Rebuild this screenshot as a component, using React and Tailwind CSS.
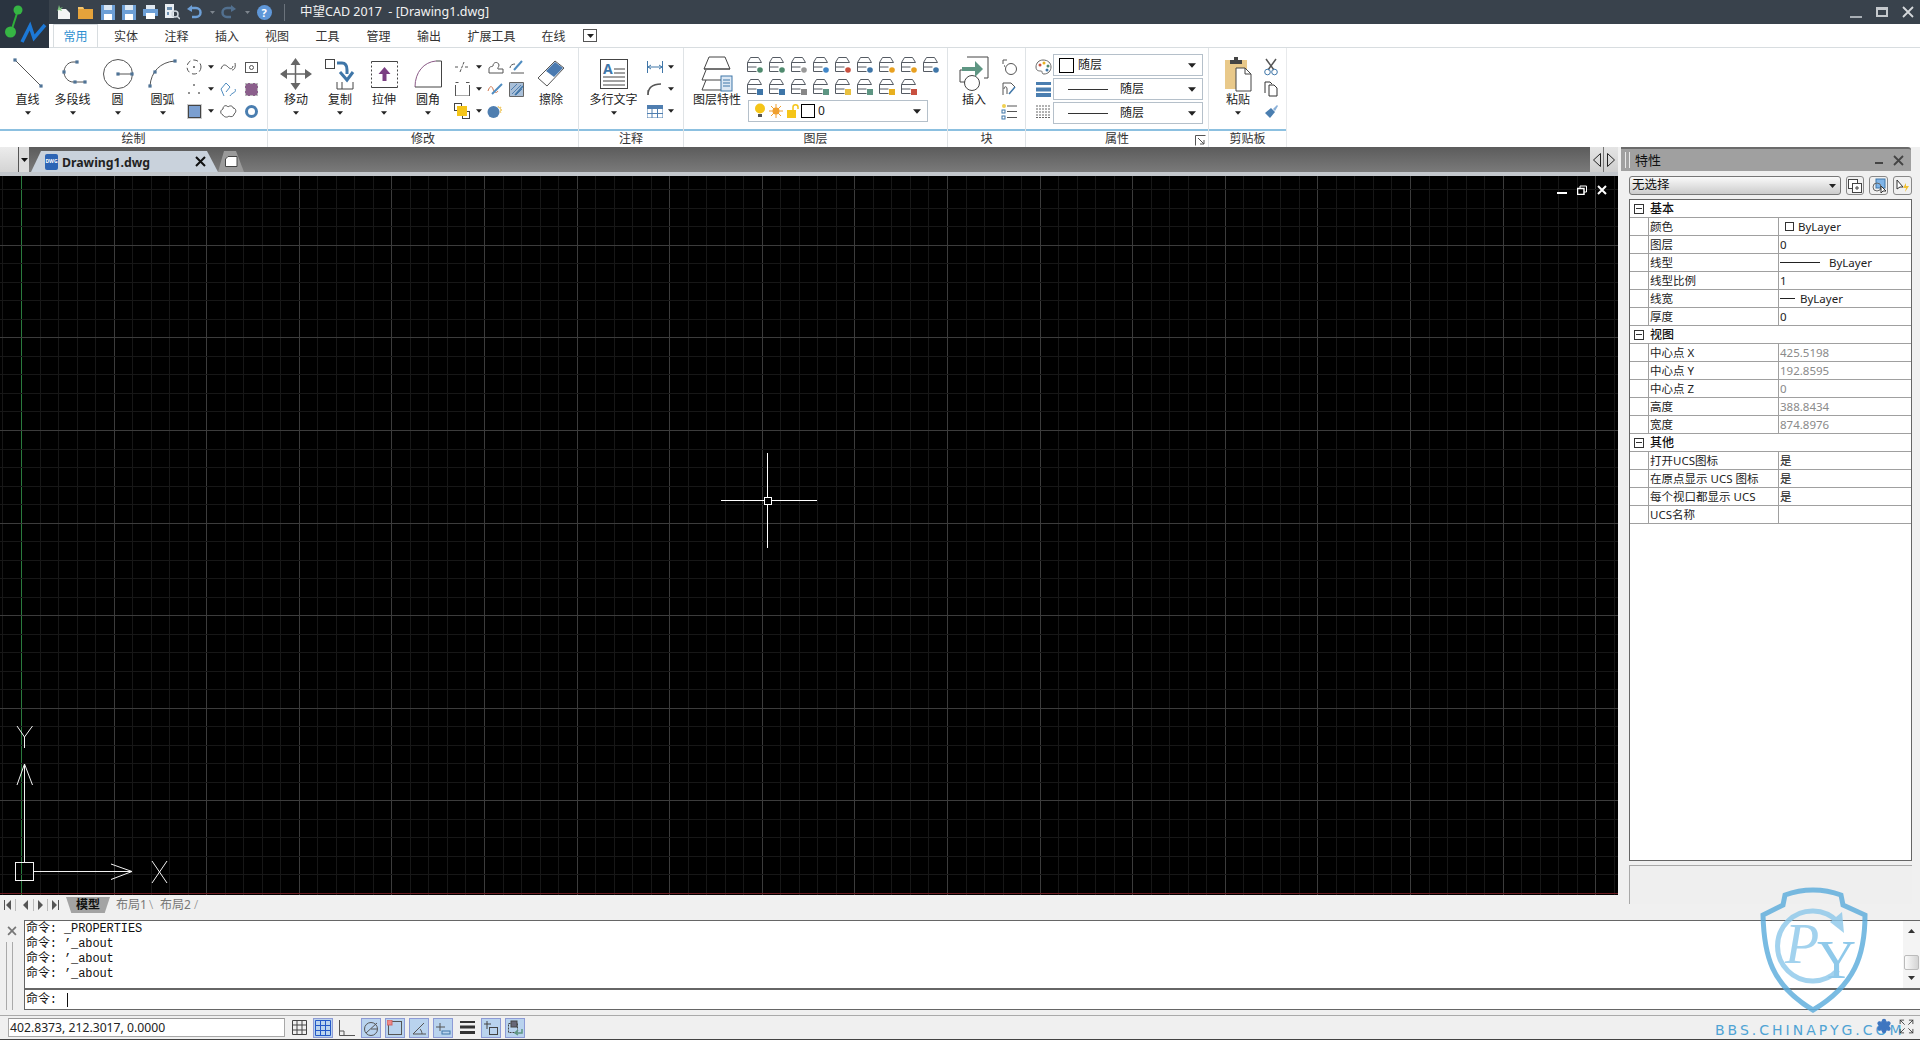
import React from "react";
import { Settings, Expand } from "lucide-react";

const Ic = ({ w = 20, h = 20, s = "#555", children }) => (
	<svg width={w} height={h} viewBox={`0 0 ${w} ${h}`} fill="none" stroke={s} strokeWidth="1">
		{children}
	</svg>
);

const Caret = ({ c = "#222", w = 7, h = 4 }) => (
	<svg width={w} height={h} viewBox="0 0 7 4" className="shrink-0">
		<path d="M0 0h7L3.5 4z" fill={c} />
	</svg>
);

const Dot = ({ x, y, r = 1.6, c = "#4f7396" }) => <rect x={x - r} y={y - r} width={r * 2} height={r * 2} fill={c} stroke="none" />;

const LargeBtn = ({ label, icon, caret = true, w = "w-[45px]" }) => (
	<div className={`flex flex-col items-center pt-[8px] shrink-0 ${w}`}>
		<div className="h-[36px] flex items-center justify-center">{icon}</div>
		<span className="h-[16px] leading-[16px] text-[12px] text-[#222] whitespace-nowrap">{label}</span>
		{caret && (
			<div className="mt-[3px]">
				<Caret w={6} h={4} />
			</div>
		)}
	</div>
);

const Small = ({ w = "w-[22px]", children }) => (
	<div className={`h-[22px] flex items-center justify-center shrink-0 ${w}`}>{children}</div>
);

const SmallCaret = () => (
	<div className="w-[12px] h-[22px] flex items-center justify-center shrink-0">
		<Caret w={6} h={4} />
	</div>
);

const Panel = ({ w, title, launcher, children }) => (
	<div className={`flex flex-col shrink-0 border-r border-[#dfe3e6] ${w}`}>
		<div className="h-[81px] flex">{children}</div>
		<div className="relative h-[18px] border-t-2 border-[#8cc0e0] text-center text-[12px] leading-[16px] text-[#333]">
			{title}
			{launcher && (
				<div className="absolute right-[2px] top-[4px]">
					<Ic w={11} h={11} s="#555">
						<path d="M.5 10.500V.5h10M3 3l6 6M9 5v4H5" />
					</Ic>
				</div>
			)}
		</div>
	</div>
);

/* ribbon drawings */
const LineIcon = () => (
	<Ic w={32} h={32}>
		<path d="M3 2l26 26" />
		<Dot x={3} y={2} />
		<Dot x={29} y={28} />
	</Ic>
);
const PolyIcon = () => (
	<Ic w={32} h={30}>
		<path d="M19 3h-3C11 3 7 8 7 13c0 5 4 10 9 10h11" />
		<Dot x={20} y={3} />
		<Dot x={7} y={13} />
		<Dot x={18} y={23} />
		<Dot x={28} y={23} />
	</Ic>
);
const CircleIcon = () => (
	<Ic w={32} h={32}>
		<circle cx="16" cy="16" r="14.500" />
		<path d="M16 16h14" />
		<Dot x={16} y={16} />
		<Dot x={30} y={16} />
	</Ic>
);
const ArcIcon = () => (
	<Ic w={30} h={30}>
		<path d="M2 27C3 13 12 3 27 2" />
		<Dot x={2} y={27} />
		<Dot x={7} y={13} />
		<Dot x={27} y={2} />
	</Ic>
);
const MoveIcon = () => (
	<svg width="32" height="32" viewBox="0 0 32 32" fill="#666">
		<path d="M15.500 2v28M2 16h28" stroke="#666" strokeWidth="1.500" />
		<path d="M15.500 0l5 7h-10zM15.500 32l5-7h-10zM0 16l7-5v10zM32 16l-7-5v10z" />
	</svg>
);
const CopyIcon = () => (
	<svg width="30" height="32" viewBox="0 0 30 32" fill="none" stroke="#444">
		<rect x=".5" y="1.500" width="9" height="9" />
		<path d="M12 24v7h5v-7M17 31h11v-7" />
		<path d="M12 5h5c4 0 5 3 5 7v4" stroke="#3f76a8" strokeWidth="3" />
		<path d="M15 14l7 8 6-8" stroke="#3f76a8" strokeWidth="3" />
	</svg>
);
const StretchIcon = () => (
	<svg width="27" height="27" viewBox="0 0 27 27" fill="none" stroke="#444">
		<path d="M.5 26.500h26M.5.5h26" />
		<path d="M.5.5v26M26.500.5v26" strokeDasharray="2 2" />
		<path d="M13.500 6l6 7h-4v7h-4v-7H7.500z" fill="#7a3f82" stroke="none" />
	</svg>
);
const FilletIcon = () => (
	<svg width="28" height="28" viewBox="0 0 28 28" fill="none">
		<path d="M1 27C1 12 10 2 22 1" stroke="#8a5a86" />
		<path d="M22 1h5.500v26H1" stroke="#444" />
	</svg>
);
const EraserIcon = () => (
	<svg width="28" height="28" viewBox="0 0 28 28">
		<path d="M1 18L18 1l9 7L10 26z" fill="#fff" stroke="#555" />
		<path d="M9 11l9-9 8 6-9 9z" fill="#4a7ab0" />
	</svg>
);
const TextIcon = () => (
	<svg width="28" height="30" viewBox="0 0 28 30" fill="none" stroke="#444">
		<rect x=".5" y=".5" width="27" height="29" />
		<text x="3" y="15" fontSize="14" fontWeight="700" fill="#3f76a8" stroke="none">A</text>
		<path d="M14 10h11M14 14h11M3 18h22M3 22h22M3 26h22" />
	</svg>
);

const Layer = ({ children }) => (
	<svg width="20" height="20" viewBox="0 0 20 20" fill="none" stroke="#555b63">
		<path d="M5.500 2.500h8l3 5h-14zM2.500 7.500v9h9M2.500 12h9" />
		{children}
	</svg>
);
const LayerPropsIcon = () => (
	<svg width="32" height="36" viewBox="0 0 32 36" fill="#fff" stroke="#444">
		<path d="M8 1h16l5 12H3zM3 13h26M5 14L1 24h26M5 24L1 34h24" />
		<rect x="20" y="20" width="11" height="15" fill="#dce8f4" stroke="#3f76a8" />
		<path d="M22 24h7M22 27h7M22 30h7" stroke="#3f76a8" />
	</svg>
);
const InsertIcon = () => (
	<svg width="30" height="36" viewBox="0 0 30 36" fill="none" stroke="#444">
		<path d="M8 1h21v21H25M1 14v12h5M1 14h6" />
		<circle cx="13" cy="27" r="7.500" />
		<path d="M3 13h14" stroke="#5e9683" strokeWidth="4" />
		<path d="M16 5l8 8-8 8z" fill="#5e9683" stroke="none" />
	</svg>
);
const PasteIcon = () => (
	<svg width="28" height="36" viewBox="0 0 28 36">
		<rect x="1" y="4" width="22" height="29" fill="#e9c98a" />
		<path d="M6 4h12v4H6zM10 1h4v4h-4z" fill="#444" />
		<path d="M12 12h9l6 6v17H12z" fill="#fff" stroke="#444" />
		<path d="M21 12v6h6" fill="none" stroke="#444" />
	</svg>
);
const Clip = ({ children, w = 20, h = 20 }) => <Ic w={w} h={h} s="#555">{children}</Ic>;

const Logo = () => (
	<div className="w-[49px] h-[48px] bg-[#2a3440] shrink-0 flex items-center justify-center">
		<svg width="49" height="48" viewBox="0 0 49 48" fill="none">
			<path d="M18 10L11 32" stroke="#2fae3a" strokeWidth="2" />
			<circle cx="18" cy="10" r="4.500" fill="#36b544" />
			<circle cx="10.500" cy="32" r="5.500" fill="#36b544" />
			<path d="M22 42L30 26l4 12L45 25" stroke="#1c78d6" strokeWidth="3.500" />
		</svg>
	</div>
);

const TopTab = ({ label, active, w }) => (
	<div
		className={`h-[23px] flex items-center justify-center text-[12px] shrink-0 ${w} ${
			active
				? "text-[#2c8fd0] bg-white border border-b-0 border-[#d8dde0] pt-[2px]"
				: "text-[#333] pt-[2px]"
		}`}>
		{label}
	</div>
);

const QuickAccess = () => (
	<div className="flex items-center ml-[4px]">
		<div className="w-[21px] flex justify-center">
			<svg width="15" height="14" viewBox="0 0 15 14"><path d="M2 4h8l4 4v6H2z" fill="#f4f4f4" /><path d="M3 0l1 3 3-1-2 2 1 2-3-1-2 1 1-2z" fill="#7fc47f" /></svg>
		</div>
		<div className="w-[23px] flex justify-center">
			<svg width="15" height="14" viewBox="0 0 15 14"><path d="M0 2h5l1 2h9v10H0z" fill="#e5a33b" /><path d="M0 2h5l1 2H0z" fill="#f3c46c" /></svg>
		</div>
		<div className="w-[21px] flex justify-center">
			<svg width="14" height="15" viewBox="0 0 14 15"><path d="M0 0h14v15H0z" fill="#6d9fd6" /><path d="M3 0h8v5H3z" fill="#dbe7f4" /><path d="M3 9h8v6H3z" fill="#fff" /></svg>
		</div>
		<div className="w-[22px] flex justify-center">
			<svg width="14" height="15" viewBox="0 0 14 15"><path d="M0 0h14v15H0z" fill="#6d9fd6" /><path d="M3 0h8v5H3z" fill="#dbe7f4" /><path d="M3 9h8v6H3z" fill="#fff" /></svg>
		</div>
		<div className="w-[21px] flex justify-center">
			<svg width="15" height="14" viewBox="0 0 15 14"><path d="M3 0h9v4H3z" fill="#dfe7f0" /><path d="M0 4h15v7H0z" fill="#6d9fd6" /><path d="M3 8h9v6H3z" fill="#fff" /></svg>
		</div>
		<div className="w-[22px] flex justify-center">
			<svg width="16" height="16" viewBox="0 0 16 16"><path d="M1 0h9v14H1z" fill="#e8edf2" /><path d="M3 3h5v3H3zM3 8h2v3H3z" fill="#6d8fb0" /><circle cx="11" cy="10" r="3" fill="none" stroke="#cfd6dd" strokeWidth="1.500" /><path d="M13 12l3 3" stroke="#cfd6dd" strokeWidth="1.500" /></svg>
		</div>
		<div className="w-[22px] flex justify-center">
			<svg width="16" height="15" viewBox="0 0 16 15" fill="none"><path d="M5 3h5a4.500 4.500 0 0 1 0 9H6" stroke="#6d9fd6" strokeWidth="2.500" /><path d="M6 0L1 4l5 3z" fill="#6d9fd6" /></svg>
		</div>
		<div className="w-[14px] flex justify-center"><Caret c="#7d858e" w={5} h={3} /></div>
		<div className="w-[20px] flex justify-center">
			<svg width="16" height="15" viewBox="0 0 16 15" fill="none"><path d="M11 3H6a4.500 4.500 0 0 0 0 9h4" stroke="#52708f" strokeWidth="2.500" /><path d="M10 0l5 4-5 3z" fill="#52708f" /></svg>
		</div>
		<div className="w-[16px] flex justify-center"><Caret c="#7d858e" w={5} h={3} /></div>
		<div className="w-[18px] flex justify-center">
			<div className="w-[15px] h-[15px] rounded-full bg-[#5f97d8] text-white text-[11px] leading-[15px] font-bold text-center">?</div>
		</div>
		<div className="w-[1px] h-[17px] bg-[#6b737c] ml-[11px]" />
	</div>
);

const Header = () => (
	<div className="flex h-[48px]">
		<Logo />
		<div className="flex-1 flex flex-col">
			<div className="h-[24px] bg-[#39424c] flex items-center">
				<QuickAccess />
				<span className="ml-[15px] text-[12.500px] text-[#f2f2f2] whitespace-pre">中望CAD 2017  - [Drawing1.dwg]</span>
				<div className="ml-auto flex items-center gap-[14px] pr-[6px]">
					<div className="w-[12px] h-[3px] border-b-2 border-[#a9afb5] mt-[8px]" />
					<div className="w-[12px] h-[10px] border-2 border-t-[3px] border-[#c5c9cd]" />
					<svg width="12" height="12" viewBox="0 0 12 12"><path d="M1 1l10 10M11 1L1 11" stroke="#d5d8db" strokeWidth="1.800" /></svg>
				</div>
			</div>
			<div className="h-[24px] bg-white flex items-end pl-[4px] border-b border-[#d8dde0]">
				<TopTab label="常用" active w="w-[45px] mr-[3px]" />
				<TopTab label="实体" w="w-[50px]" />
				<TopTab label="注释" w="w-[51px]" />
				<TopTab label="插入" w="w-[50px]" />
				<TopTab label="视图" w="w-[50px]" />
				<TopTab label="工具" w="w-[51px]" />
				<TopTab label="管理" w="w-[51px]" />
				<TopTab label="输出" w="w-[50px]" />
				<TopTab label="扩展工具" w="w-[75px]" />
				<TopTab label="在线" w="w-[49px]" />
				<div className="w-[14px] h-[13px] border border-[#555] flex items-center justify-center mb-[5px] ml-[5px]">
					<Caret w={7} h={4} />
				</div>
			</div>
		</div>
	</div>
);

const DrawPanel = () => (
	<Panel w="w-[268px]" title="绘制">
		<div className="flex pl-[5px] w-[183px] shrink-0">
			<LargeBtn label="直线" icon={<LineIcon />} />
			<LargeBtn label="多段线" icon={<PolyIcon />} />
			<LargeBtn label="圆" icon={<CircleIcon />} />
			<LargeBtn label="圆弧" icon={<ArcIcon />} />
		</div>
		<div className="flex flex-col pt-[8px]">
			<div className="flex">
				<Small><Clip w={16} h={16}><circle cx="8" cy="8" r="7" strokeDasharray="5 3" /><path d="M7 8h2M8 7v2" /></Clip></Small>
				<SmallCaret />
				<Small w="w-[23px]"><Clip w={17} h={10}><path d="M1 7c2-6 5-4 7-2s4 3 5-1M15 1c1 5-1 7-3 7" /></Clip></Small>
				<Small><Clip w={13} h={11}><rect x=".5" y=".5" width="12" height="10" /><circle cx="6.500" cy="5.500" r="2" /></Clip></Small>
			</div>
			<div className="flex">
				<Small><Clip w={14} h={10}><Dot x={7} y={1} r={.8} c="#555" /><Dot x={2} y={9} r={.8} c="#555" /><Dot x={12} y={9} r={.8} c="#555" /></Clip></Small>
				<SmallCaret />
				<Small w="w-[23px]"><Clip w={17} h={15}><path d="M6 1L1 7l3 7M6 1l4 4-4 5M10 14c2-4 7-3 5-7" stroke="#4f8cc0" /></Clip></Small>
				<Small><div className="w-[13px] h-[13px] bg-[#8b5f8c] border border-dashed border-[#bbb]" /></Small>
			</div>
			<div className="flex">
				<Small><div className="w-[13px] h-[13px] bg-[#7b9fd0] border border-[#444] outline-1 outline-[#ccc]" /></Small>
				<SmallCaret />
				<Small w="w-[23px]"><Clip w={17} h={14}><path d="M3 5c0-4 4-4 5-2 2-2 5-1 5 1 3 0 4 4 1 6 0 3-4 3-5 2-2 2-5 1-6-1-3-1-3-5 0-6z" /></Clip></Small>
				<Small><div className="w-[13px] h-[13px] rounded-full border-[3px] border-[#4a7eb0]" /></Small>
			</div>
		</div>
	</Panel>
);

const ModifyPanel = () => (
	<Panel w="w-[311px]" title="修改">
		<div className="flex pl-[6px] w-[183px] shrink-0">
			<LargeBtn label="移动" icon={<MoveIcon />} w="w-[44px]" />
			<LargeBtn label="复制" icon={<CopyIcon />} w="w-[44px]" />
			<LargeBtn label="拉伸" icon={<StretchIcon />} w="w-[44px]" />
			<LargeBtn label="圆角" icon={<FilletIcon />} w="w-[44px]" />
		</div>
		<div className="flex flex-col pt-[8px] shrink-0 w-[80px]">
			<div className="flex">
				<Small><Clip w={16} h={12}><path d="M1 6h3M6 11l4-10M11 6h4" strokeDasharray="3 1" /></Clip></Small>
				<SmallCaret />
				<Small w="w-[20px]"><Clip w={17} h={14}><path d="M2 9c0-3 3-2 4-3 0-4 5-5 6-1 0 2-2 3-1 4h5v4H2z" /></Clip></Small>
				<Small w="w-[22px]"><Clip w={16} h={14}><path d="M2 8c0-3 3-4 5-4M3 13h13" /><path d="M6 10l8-9" stroke="#4f8cc0" strokeWidth="2" /></Clip></Small>
			</div>
			<div className="flex">
				<Small><Clip w={15} h={14}><path d="M.5 3v11h14V3M.5 .5h3M11 .5h3.500" /></Clip></Small>
				<SmallCaret />
				<Small w="w-[20px]"><Clip w={17} h={14}><path d="M1 9c2-6 4-5 5-2s3 5 5 2" stroke="#d0784f" /><path d="M5 12l10-10" stroke="#4f8cc0" strokeWidth="2" /></Clip></Small>
				<Small w="w-[22px]">
					<svg width="15" height="15" viewBox="0 0 15 15"><path d="M.5.5h14v14H.5z" fill="#a9bfd8" stroke="#666" /><path d="M3 12L12 3M2 8l6-6M7 13l6-6" stroke="#4f7eb0" /><path d="M6 13L14 4" stroke="#3f76a8" strokeWidth="1.500" /></svg>
				</Small>
			</div>
			<div className="flex">
				<Small>
					<svg width="16" height="16" viewBox="0 0 16 16" fill="none" stroke="#444"><rect x=".5" y=".5" width="7" height="7" /><rect x="8.500" y="8.500" width="7" height="7" /><rect x="3" y="3" width="10" height="10" fill="#f5c518" stroke="none" /></svg>
				</Small>
				<SmallCaret />
				<Small w="w-[20px]">
					<svg width="16" height="14" viewBox="0 0 16 14"><circle cx="6.500" cy="8" r="6" fill="#4f7eb0" /><path d="M11 2l1 2 2-1-1 2 2 1-2 1 1 2" fill="none" stroke="#f0c860" /></svg>
				</Small>
			</div>
		</div>
		<LargeBtn label="擦除" icon={<EraserIcon />} caret={false} w="w-[40px]" />
	</Panel>
);

const AnnotatePanel = () => (
	<Panel w="w-[105px]" title="注释">
		<LargeBtn label="多行文字" icon={<TextIcon />} w="w-[61px] ml-[4px]" />
		<div className="flex flex-col pt-[8px]">
			<div className="flex">
				<Small w="w-[21px]"><Clip w={16} h={12}><path d="M.5 0v12M15.500 0v12M1 6h14M4 4L1 6l3 2M12 4l3 2-3 2" stroke="#3f76a8" /></Clip></Small>
				<SmallCaret />
			</div>
			<div className="flex">
				<Small w="w-[21px]"><Clip w={16} h={14}><path d="M1 13c0-7 4-11 13-11" strokeWidth="1.500" /><path d="M1 13V8" /></Clip></Small>
				<SmallCaret />
			</div>
			<div className="flex">
				<Small w="w-[21px]">
					<svg width="16" height="13" viewBox="0 0 16 13"><path d="M0 0h16v13H0z" fill="#fff" stroke="#4f7eb0" /><path d="M0 0h16v4H0z" fill="#4f7eb0" /><path d="M5 4v9M10.500 4v9M0 8.500h16" stroke="#4f7eb0" /></svg>
				</Small>
				<SmallCaret />
			</div>
		</div>
	</Panel>
);

const LAYER_ROW_1 = ["#4f8a6e", "#4f8a6e", "#999", "#3f86c8", "#c8503f", "#3f76a8", "#e8a020", "#e8a020", "#3f76a8"];
const LAYER_ROW_2 = ["#3f76a8", "#3f76a8", "#888", "#5e9683", "#e8c040", "#5e9683", "#e8b020", "#c8503f"];

const LayerPanel = () => (
	<Panel w="w-[264px]" title="图层">
		<LargeBtn label="图层特性" icon={<LayerPropsIcon />} caret={false} w="w-[60px] ml-[3px]" />
		<div className="flex flex-col pt-[6px] ml-[-3px]">
			<div className="flex">
				{LAYER_ROW_1.map((c, i) => (
					<div key={i} className="w-[22px] h-[22px] flex items-center justify-center shrink-0">
						<Layer><circle cx="15" cy="15" r="2.800" fill={c} stroke="none" /></Layer>
					</div>
				))}
			</div>
			<div className="flex">
				{LAYER_ROW_2.map((c, i) => (
					<div key={i} className="w-[22px] h-[22px] flex items-center justify-center shrink-0">
						<Layer><rect x="12" y="12" width="6" height="6" fill={c} stroke="none" /></Layer>
					</div>
				))}
			</div>
			<div className="ml-[4px] mt-[2px] w-[180px] h-[22px] bg-white border border-[#b5c0ca] flex items-center pl-[5px] pr-[6px]">
				<svg width="12" height="16" viewBox="0 0 12 16"><circle cx="6" cy="5.500" r="5" fill="#f5c518" /><path d="M4 11h4v3H4z" fill="#555" /></svg>
				<svg width="14" height="14" viewBox="0 0 14 14" className="ml-[3px]"><circle cx="7" cy="7" r="3.500" fill="#f0a030" /><path d="M7 0v14M0 7h14M2 2l10 10M12 2L2 12" stroke="#f0a030" /></svg>
				<svg width="12" height="14" viewBox="0 0 12 14" fill="none" className="ml-[4px]"><rect x="0" y="6" width="9" height="8" fill="#f5c518" /><path d="M6 6V3c0-3 5-3 5 0v2" stroke="#f5c518" strokeWidth="1.500" /></svg>
				<div className="w-[14px] h-[14px] border border-black ml-[2px]" />
				<span className="ml-[3px] text-[12px] text-[#222]">0</span>
				<div className="ml-auto"><Caret w={8} h={5} /></div>
			</div>
		</div>
	</Panel>
);

const BlockPanel = () => (
	<Panel w="w-[78px]" title="块">
		<div className="w-[50px] shrink-0 ml-[1px]">
			<LargeBtn label="插入" icon={<InsertIcon />} caret={false} w="w-[50px]" />
		</div>
		<div className="flex flex-col pt-[8px]">
			<Small w="w-[20px]"><Clip w={15} h={16}><path d="M1 5V1h4M3 7c-2 0 0 0 0 0" /><circle cx="9" cy="10" r="5.500" /></Clip></Small>
			<Small w="w-[20px]"><Clip w={16} h={17}><path d="M2 14V2h8l4 4M3 8c0-3 3-3 3 0v5" /><path d="M8 13l6-7" stroke="#3f76a8" strokeWidth="1.500" /></Clip></Small>
			<Small w="w-[20px]"><Clip w={16} h={17}><rect x="1" y="7" width="3" height="3" stroke="#3f76a8" /><rect x="1" y="13" width="3" height="3" stroke="#3f76a8" /><path d="M6 8.500h10M6 14.500h10M6 3h10" /><circle cx="3" cy="3" r="2" fill="#f0d050" stroke="none" /></Clip></Small>
		</div>
	</Panel>
);

const PropSelect = ({ swatch, line, label }) => (
	<div className="w-[150px] h-[22px] bg-white border border-[#b5c0ca] flex items-center pl-[5px] pr-[6px] text-[12px] text-[#222]">
		{swatch && <div className="w-[15px] h-[15px] border border-black mr-[4px]" />}
		{line && <div className="w-[40px] h-[1px] bg-[#333] ml-[9px] mr-[12px]" />}
		<span>{label}</span>
		<div className="ml-auto"><Caret w={8} h={5} /></div>
	</div>
);

const PropsPanel = () => (
	<Panel w="w-[183px]" title="属性" launcher>
		<div className="flex flex-col pt-[8px] w-[27px] shrink-0 pl-[7px]">
			<Small w="w-[20px]">
				<svg width="17" height="16" viewBox="0 0 17 16"><path d="M8 1c5 0 8 3 8 7s-3 7-7 7c-3 0-1-3-3-3s-5 0-5-4 3-7 7-7z" fill="#fff" stroke="#666" /><circle cx="5" cy="6" r="1.500" fill="#c8503f" /><circle cx="9" cy="4" r="1.500" fill="#e8b020" /><circle cx="13" cy="7" r="1.500" fill="#4f8a6e" /><circle cx="12" cy="11" r="1.500" fill="#3f76a8" /></svg>
			</Small>
			<Small w="w-[20px]">
				<svg width="15" height="15" viewBox="0 0 15 15"><path d="M0 0h15v3H0zM0 5.500h15v4H0zM0 11h15v4H0z" fill="#4a7eb0" /></svg>
			</Small>
			<Small w="w-[20px]">
				<svg width="15" height="13" viewBox="0 0 15 13" stroke="#666" strokeDasharray="2 1"><path d="M0 1h15M0 4h15M0 7h15M0 10h15M0 12.500h15" /></svg>
			</Small>
		</div>
		<div className="flex flex-col pt-[6px] gap-[2px]">
			<PropSelect swatch label="随层" />
			<PropSelect line label="随层" />
			<PropSelect line label="随层" />
		</div>
	</Panel>
);

const ClipboardPanel = () => (
	<Panel w="w-[78px] border-r-[#e8eaec]" title="剪贴板">
		<LargeBtn label="粘贴" icon={<PasteIcon />} w="w-[40px] ml-[9px]" />
		<div className="flex flex-col pt-[8px] ml-[3px]">
			<Small w="w-[20px]"><Clip w={14} h={18}><path d="M2 1l8 11M12 1L4 12" strokeWidth="1.500" /><circle cx="3.500" cy="14" r="2.800" stroke="#3f76a8" /><circle cx="10.500" cy="14" r="2.800" stroke="#3f76a8" /></Clip></Small>
			<Small w="w-[20px]"><Clip w={14} h={16}><path d="M1 12V1h5l2 2M5 4h5l3 3v8H5z" stroke="#333" /></Clip></Small>
			<Small w="w-[20px]"><svg width="15" height="15" viewBox="0 0 15 15"><path d="M1 9l6-5 4 4-5 6z" fill="#4a7eb0" /><path d="M9 5l4-4 1 1-3 5z" fill="#8ab0d8" /></svg></Small>
		</div>
	</Panel>
);

const Ribbon = () => (
	<div className="flex h-[99px] bg-white">
		<DrawPanel />
		<ModifyPanel />
		<AnnotatePanel />
		<LayerPanel />
		<BlockPanel />
		<PropsPanel />
		<ClipboardPanel />
	</div>
);

const DocTabs = () => (
	<div className="h-[29px] flex flex-col shrink-0">
		<div className="h-[25px] flex bg-gradient-to-b from-[#5c5c5c] to-[#7a7a7a]">
			<div className="w-[19px] bg-gradient-to-b from-[#ececec] to-[#d4d4d4] border-r border-[#555]" />
			<div className="w-[10px] bg-[#dcdcdc] flex items-center justify-center">
				<Caret c="#111" w={7} h={6} />
			</div>
			<div className="w-[2px]" />
			<div className="w-[187px] h-[21px] mt-[4px] bg-[#c9d2dc] flex items-center pl-[14px] pr-[10px] [clip-path:polygon(0_100%,10px_0,176px_0,187px_100%)]">
				<div className="w-[13px] h-[16px] bg-[#2d65b5] rounded-[2px] flex items-center justify-center text-[5px] font-bold text-white">DWG</div>
				<span className="ml-[4px] text-[12.300px] leading-[21px] pt-[1px] font-bold text-[#222] font-['Noto_Sans']">Drawing1.dwg</span>
				<svg width="11" height="11" viewBox="0 0 11 11" className="ml-auto mr-[2px]"><path d="M1 1l9 9M10 1L1 10" stroke="#111" strokeWidth="2" /></svg>
			</div>
			<div className="w-[26px] h-[21px] mt-[4px] bg-[#9a9a9a] flex items-center justify-center [clip-path:polygon(0_100%,6px_0,18px_0,26px_100%)]">
				<svg width="13" height="11" viewBox="0 0 13 11"><path d="M.5 3L3 .5h9v10H.5z" fill="#fff" stroke="#444" /></svg>
			</div>
			<div className="ml-auto w-[28px] bg-gradient-to-b from-[#e4e4e4] to-[#cfcfcf] flex">
				<div className="w-[14px] flex items-center justify-center border-r border-[#777]">
					<svg width="8" height="14" viewBox="0 0 8 14" fill="none" stroke="#222"><path d="M7.500.5L.5 7l7 6.500z" /></svg>
				</div>
				<div className="w-[14px] flex items-center justify-center">
					<svg width="8" height="14" viewBox="0 0 8 14" fill="none" stroke="#222"><path d="M.5.5l7 6.500-7 6.500z" /></svg>
				</div>
			</div>
		</div>
		<div className="h-[4px] bg-[#c3c7cc]" />
	</div>
);

const STEP = 92.6;
const ORIGIN_X = 21;
const ORIGIN_Y = 717;
const W = 1618;
const H = 719;

const gridLines = (origin, max) => {
	const out = [];
	for (let k = -40; k < 500; k++) {
		const p = origin + (k * STEP) / 5;
		if (p >= 0 && p <= max) out.push({ p: Math.round(p) + 0.5, major: k % 5 === 0, axis: k === 0 });
	}
	return out;
};

const CadCanvas = () => (
	<div className="relative flex-1 bg-black overflow-hidden">
		<svg width={W} height={H} viewBox={`0 0 ${W} ${H}`} shapeRendering="crispEdges" className="block">
			{gridLines(ORIGIN_X, W).map((l) => (
				<line key={`v${l.p}`} x1={l.p} x2={l.p} y1="0" y2={H} stroke={l.axis ? "#2a7a3e" : l.major ? "#3c3c3c" : "#171717"} />
			))}
			{gridLines(ORIGIN_Y, H).map((l) => (
				<line key={`h${l.p}`} y1={l.p} y2={l.p} x1="0" x2={W} stroke={l.axis ? "#6a1c22" : l.major ? "#3c3c3c" : "#171717"} />
			))}
			<g stroke="#f2f2f2" fill="none" shapeRendering="auto">
				<rect x="15.500" y="686.500" width="18" height="18" />
				<path d="M24.500 686V588M17 609l7.500-21 8 21M33 695.500h99M111 688l21 7.500-21 8" />
				<path d="M17 550l7.500 11 8-11M24.500 561v11M152 685l15 22M167 685l-15 22" />
			</g>
			<g stroke="#fff" fill="none">
				<path d="M720.500 324.500h96M767.500 277v95" />
				<rect x="764" y="321" width="7" height="7" fill="#000" />
			</g>
		</svg>
		<div className="absolute top-[9px] left-[1557px] flex items-center gap-[10px]">
			<div className="w-[10px] h-[2px] bg-white mt-[6px]" />
			<svg width="10" height="10" viewBox="0 0 10 10" fill="#000" stroke="#fff"><path d="M3 1h6.500v6H3z" /><path d="M.5 3.500h6.500v6H.5z" strokeWidth="1.500" /></svg>
			<svg width="10" height="10" viewBox="0 0 10 10"><path d="M1 1l8 8M9 1L1 9" stroke="#fff" strokeWidth="2" /></svg>
		</div>
	</div>
);

const LayoutTabs = () => (
	<div className="h-[25px] bg-[#f0f0f0] flex items-center shrink-0 text-[12px] pb-[5px]">
		<div className="flex items-center w-[66px] text-[#555]">
			<svg width="66" height="12" viewBox="0 0 66 12" fill="#555">
				<path d="M4 1h1v10H4zM11 1v10L6 6zM28 1v10l-5-5zM38 1v10l5-5zM52 1v10l5-5zM58 1h1v10h-1z" />
				<path d="M15.500 0v12M33.500 0v12M47.500 0v12" stroke="#bbb" />
			</svg>
		</div>
		<div className="w-[44px] h-[16px] bg-[#a3a3a3] flex items-center justify-center font-bold text-[#111] [clip-path:polygon(0_0,100%_0,88%_100%,12%_100%)]">模型</div>
		<div className="w-[6px]" />
		<span className="w-[33px] text-[#777]">布局1</span>
		<span className="w-[11px] text-[#888] font-light">\</span>
		<span className="w-[34px] text-[#777]">布局2</span>
		<span className="text-[#888] font-light">/</span>
	</div>
);

const Section = ({ label }) => (
	<div className="h-[18px] flex items-center border-b border-[#a0a0a0] pl-[1px]">
		<div className="w-[10px] h-[10px] border border-[#333] flex items-center justify-center ml-[3px]">
			<div className="w-[6px] h-[1px] bg-[#333]" />
		</div>
		<span className="ml-[6px] mt-[1px] text-[12px] text-[#111] font-medium">{label}</span>
	</div>
);

const Row = ({ label, value, gray, swatch, line }) => (
	<div className="h-[18px] flex items-center border-b border-[#a0a0a0] text-[11.500px] leading-[17px]">
		<div className="w-[18px] h-full shrink-0" />
		<div className="w-[131px] h-full border-l border-r border-[#a0a0a0] pl-[1px] whitespace-nowrap text-[#222] overflow-hidden">{label}</div>
		<div className={`flex-1 h-full pl-[1px] flex items-center whitespace-nowrap ${gray ? "text-[#8a8a8a]" : "text-[#222]"}`}>
			{swatch && <div className="w-[9px] h-[9px] border border-[#333] ml-[5px] mr-[4px]" />}
			{line && <div className={`h-[1px] bg-[#222] mr-[4px] ${line}`} />}
			{value}
		</div>
	</div>
);

const PropertiesPalette = () => (
	<div className="w-[302px] shrink-0 flex flex-col bg-[#f0f0f0]">
		<div className="ml-[3px] w-[290px] h-[24px] bg-[#a0a0a0] border-t-2 border-[#6b6b6b] flex items-center rounded-tr-[3px]">
			<div className="w-[5px] h-[16px] ml-[4px] border-l border-r border-[#e8e8e8]" />
			<span className="ml-[5px] mt-[1px] text-[13px] text-[#111]">特性</span>
			<div className="ml-auto w-[8px] h-[2px] bg-[#444] mt-[6px]" />
			<svg width="11" height="11" viewBox="0 0 11 11" className="ml-[10px] mr-[7px]"><path d="M1 1l9 9M10 1L1 10" stroke="#444" strokeWidth="1.800" /></svg>
		</div>
		<div className="flex items-center h-[28px] pl-[11px] pt-[1px]">
			<div className="w-[212px] h-[19px] rounded-[3px] border border-[#777] bg-gradient-to-b from-[#fafafa] to-[#cccccc] flex items-center pl-[2px] pr-[4px] text-[12.500px] text-[#111]">
				无选择
				<div className="ml-auto"><Caret w={7} h={4} /></div>
			</div>
			<div className="ml-[5px] w-[18px] h-[19px] rounded-[3px] border border-[#888] flex items-center justify-center">
				<svg width="14" height="14" viewBox="0 0 14 14" fill="#fff" stroke="#444"><rect x=".5" y=".5" width="9" height="9" /><rect x="4.500" y="4.500" width="9" height="9" /><path d="M9 7v4M7 9h4" /></svg>
			</div>
			<div className="ml-[5px] w-[19px] h-[19px] rounded-[3px] border border-[#888] flex items-center justify-center">
				<svg width="14" height="15" viewBox="0 0 14 15"><rect x="4" y="1" width="9" height="9" fill="#7fb4e8" stroke="#3f76a8" /><circle cx="5" cy="9" r="4" fill="none" stroke="#666" /><path d="M9 8v7l2-2 3 0z" fill="#fff" stroke="#333" /></svg>
			</div>
			<div className="ml-[5px] w-[19px] h-[19px] rounded-[3px] border border-[#888] flex items-center justify-center">
				<svg width="14" height="14" viewBox="0 0 14 14"><path d="M1 1v9l3-2 3 0z" fill="#fff" stroke="#333" /><path d="M10 4l-3 5h3l-1 4 4-6h-3z" fill="#f0c030" /></svg>
			</div>
		</div>
		<div className="ml-[11px] w-[283px] h-[662px] bg-white border border-[#666]">
			<Section label="基本" />
			<Row label="颜色" value="ByLayer" swatch />
			<Row label="图层" value="0" />
			<Row label="线型" value="ByLayer" line="w-[40px] mr-[9px]" />
			<Row label="线型比例" value="1" />
			<Row label="线宽" value="ByLayer" line="w-[15px] mr-[5px]" />
			<Row label="厚度" value="0" />
			<Section label="视图" />
			<Row label="中心点 X" value="425.5198" gray />
			<Row label="中心点 Y" value="192.8595" gray />
			<Row label="中心点 Z" value="0" gray />
			<Row label="高度" value="388.8434" gray />
			<Row label="宽度" value="874.8976" gray />
			<Section label="其他" />
			<Row label="打开UCS图标" value="是" />
			<Row label="在原点显示 UCS 图标" value="是" />
			<Row label="每个视口都显示 UCS" value="是" />
			<Row label="UCS名称" value="" />
		</div>
		<div className="ml-[11px] mt-[4px] w-[283px] h-[39px] border border-b-0 border-r-0 border-[#a8a8a8] bg-[#efefef]" />
	</div>
);

const CMD_LINES = ["命令: _PROPERTIES", "命令: ’_about", "命令: ’_about", "命令: ’_about"];

const CommandLine = () => (
	<div className="h-[90px] flex bg-[#f0f0f0] shrink-0">
		<div className="w-[24px] flex flex-col items-center pt-[6px] shrink-0">
			<svg width="10" height="10" viewBox="0 0 10 10"><path d="M1 1l8 8M9 1L1 9" stroke="#777" strokeWidth="1.800" /></svg>
			<div className="mt-[6px] w-[7px] h-[70px] border-l border-r border-[#aaa] -ml-[6px]" />
		</div>
		<div className="flex-1 flex flex-col border border-r-0 border-[#666] bg-white font-['Liberation_Mono','Noto_Sans_CJK_SC',monospace] text-[12px] tracking-[-0.1px] text-[#111]">
			<div className="h-[69px] flex border-b-2 border-[#666]">
				<div className="flex-1 pl-[1px] pt-[1px]">
					{CMD_LINES.map((l, i) => (
						<div key={i} className="h-[15px] leading-[15px] whitespace-pre">{l}</div>
					))}
				</div>
				<div className="w-[17px] bg-[#f4f4f4] flex flex-col items-center pt-[8px]">
					<svg width="7" height="4" viewBox="0 0 7 4"><path d="M0 4h7L3.500 0z" fill="#333" /></svg>
					<div className="w-[15px] h-[15px] mt-[22px] border border-[#bbb] rounded-[2px] bg-gradient-to-r from-[#fbfbfb] to-[#d4d4d4]" />
					<div className="mt-[6px]"><Caret c="#333" w={7} h={4} /></div>
				</div>
			</div>
			<div className="flex-1 flex items-center pl-[1px] whitespace-pre">
				命令: <div className="w-[1px] h-[14px] bg-[#111] ml-[3px]" />
			</div>
		</div>
	</div>
);

const StatusBtn = ({ on, children }) => (
	<div className={`w-[20px] h-[20px] flex items-center justify-center shrink-0 ${on ? "bg-[#b9d3ee] border border-[#8d9bd6]" : ""}`}>
		{children}
	</div>
);

const StatusBar = () => (
	<div className="h-[30px] bg-[#f0f0f0] pt-[5px] shrink-0">
		<div className="h-[25px] border-t border-[#aaa] border-b border-b-[#444] flex items-center pl-[8px] gap-[4px]">
			<div className="w-[277px] h-[19px] bg-white border border-[#a8a8a8] border-t-[#999] text-[12.200px] leading-[17px] pl-[1px] text-[#222]">
				402.8373, 212.3017, 0.0000
			</div>
			<StatusBtn>
				<svg width="15" height="15" viewBox="0 0 15 15" fill="none" stroke="#444"><path d="M.5.5h14v14H.5zM5 0v15M10 0v15M0 5h15M0 10h15" /></svg>
			</StatusBtn>
			<StatusBtn on>
				<svg width="16" height="16" viewBox="0 0 16 16" fill="none" stroke="#2358c8"><path d="M.5.5h15v15H.5zM5.500 0v16M10.500 0v16M0 5.500h16M0 10.500h16" /></svg>
			</StatusBtn>
			<StatusBtn>
				<svg width="16" height="16" viewBox="0 0 16 16" fill="none" stroke="#555"><path d="M.5 0v15.500H16M.5 11H5v4.500" /></svg>
			</StatusBtn>
			<StatusBtn on>
				<svg width="16" height="16" viewBox="0 0 16 16" fill="none" stroke="#555"><circle cx="8" cy="9" r="6.500" /><path d="M3 13L14 3M8 9h6" /></svg>
			</StatusBtn>
			<StatusBtn on>
				<svg width="16" height="16" viewBox="0 0 16 16" fill="none" stroke="#555"><rect x="1.500" y="1.500" width="13" height="13" /><rect x="0" y="0" width="5" height="5" fill="#e88" stroke="#c66" /></svg>
			</StatusBtn>
			<StatusBtn on>
				<svg width="16" height="16" viewBox="0 0 16 16" fill="none" stroke="#555"><path d="M2 14h13M2 14L13 3M9 9c1 1 2 3 2 5" /></svg>
			</StatusBtn>
			<StatusBtn on>
				<svg width="16" height="16" viewBox="0 0 16 16" fill="none" stroke="#555"><path d="M1 7h9M5 3v8" /><rect x="7" y="11" width="8" height="3" stroke="#3f76a8" /></svg>
			</StatusBtn>
			<StatusBtn>
				<svg width="15" height="13" viewBox="0 0 15 13"><path d="M0 0h15v2H0zM0 4.500h15v3H0zM0 10h15v3H0z" fill="#333" /></svg>
			</StatusBtn>
			<StatusBtn on>
				<svg width="16" height="16" viewBox="0 0 16 16" fill="none" stroke="#444"><path d="M1 4h7M4 1v8" /><rect x="6.500" y="7.500" width="8" height="7" /></svg>
			</StatusBtn>
			<StatusBtn on>
				<svg width="16" height="16" viewBox="0 0 16 16" fill="none" stroke="#444"><rect x="1.500" y="3.500" width="9" height="9" strokeDasharray="2 1" /><rect x="4" y="1" width="6" height="6" fill="#667" /><path d="M15 9v4H8M11 10l-3 3 3 2" stroke="#5e9683" strokeWidth="1.500" /></svg>
			</StatusBtn>
		</div>
	</div>
);

const Watermark = () => (
	<>
		<div className="absolute left-[1760px] top-[886px] opacity-80">
			<svg width="108" height="128" viewBox="0 0 108 128" fill="none">
				<path d="M53 4c10 0 20 2 28 5l2 10 22 10c0 40-10 70-52 95C11 99 4 69 3 29l20-10 2-10c8-3 18-5 28-5z" stroke="#58abdc" strokeWidth="5" />
				<path d="M78 36A35 35 0 1 0 78 84" stroke="#8cc8ea" strokeWidth="5" />
				<path d="M70 36L82 26l2 21z" fill="#8cc8ea" />
				<text x="25" y="77" fontSize="56" fontStyle="italic" fill="#8cc8ea" fontFamily="Liberation Serif, serif">P</text>
				<text x="57" y="92" fontSize="54" fill="#74bce6" fontFamily="Liberation Serif, serif">Y</text>
			</svg>
		</div>
		<div className="absolute left-[1715px] top-[1020px] text-[14px] leading-[20px] tracking-[3px] text-[#4fa3d4] font-['DejaVu_Sans',sans-serif] whitespace-nowrap">
			BBS.CHINAPYG.COM
		</div>
		<div className="absolute left-[1876px] top-[1018px] text-[#3f76c0]">
			<Settings size={16} fill="#3f76c0" stroke="#3f76c0" />
		</div>
		<div className="absolute left-[1898px] top-[1018px] text-[#333]">
			<Expand size={17} strokeWidth={1.200} />
		</div>
	</>
);

export default function App() {
	return (
		<div className="relative w-[1920px] h-[1040px] overflow-hidden flex flex-col bg-[#f0f0f0] font-['Noto_Sans','Noto_Sans_CJK_SC',sans-serif]">
			<Header />
			<Ribbon />
			<div className="flex h-[773px] shrink-0">
				<div className="w-[1618px] flex flex-col shrink-0">
					<DocTabs />
					<CadCanvas />
					<LayoutTabs />
				</div>
				<PropertiesPalette />
			</div>
			<CommandLine />
			<StatusBar />
			<Watermark />
		</div>
	);
}
